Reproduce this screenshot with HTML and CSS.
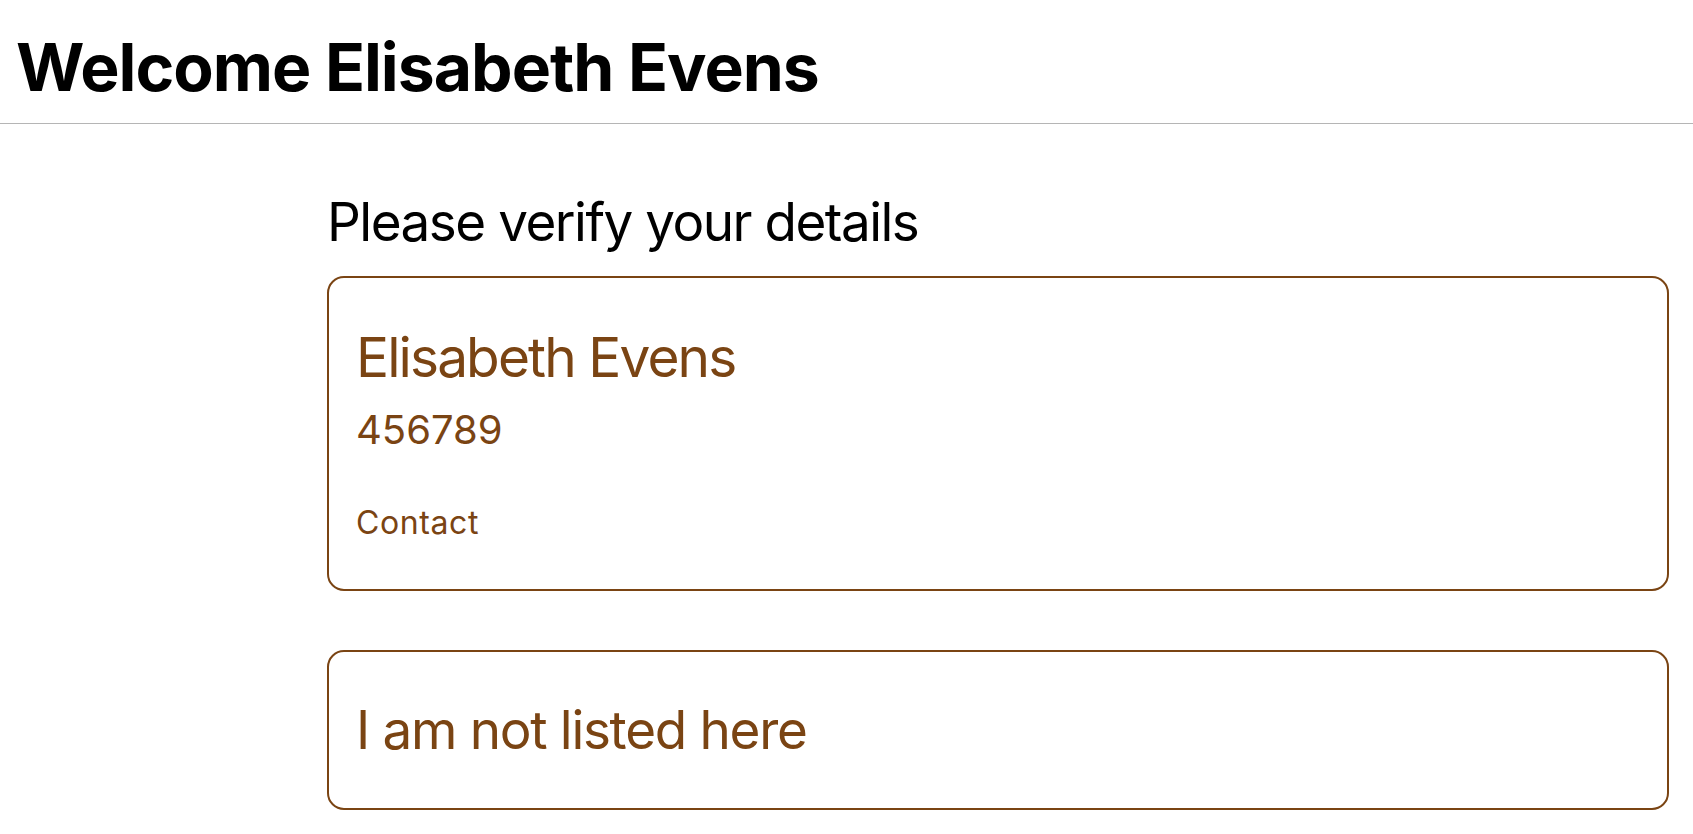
FILE: index.html
```html
<!DOCTYPE html>
<html lang="en">
<head>
<meta charset="utf-8">
<title>Welcome</title>
<link rel="stylesheet" href="styles.css">
</head>
<body>
<header class="topbar">
  <h1 class="title">Welcome Elisabeth Evens</h1>
</header>
<main class="content">
  <h2 class="prompt">Please verify your details</h2>
  <section class="card card-person">
    <div class="person-name">Elisabeth Evens</div>
    <div class="person-id">456789</div>
    <div class="person-link">Contact</div>
  </section>
  <section class="card card-other">
    <div class="other-text">I am not listed here</div>
  </section>
</main>
</body>
</html>
```
FILE: styles.css
```css
html, body {
  margin: 0;
  padding: 0;
  background: #ffffff;
}
body {
  font-family: Inter, "Noto Sans", "Liberation Sans", sans-serif;
  color: #000;
}
.topbar {
  border-bottom: 1px solid #b5b5b5;
  padding: 27px 16px 16px;
}
.title {
  margin: 0;
  font-size: 66px;
  line-height: 80px;
  font-weight: 700;
  letter-spacing: -1px;
}
.content {
  padding: 0 24px 0 327px;
  display: flex;
  flex-direction: column;
}
.prompt {
  margin: 66px 0 22px;
  font-size: 53px;
  line-height: 64px;
  font-weight: 400;
  letter-spacing: -1.5px;
}
.card {
  border: 2px solid #7a4413;
  border-radius: 17px;
  color: #7a4413;
  padding: 0 27px;
}
.card-person {
  padding-top: 46px;
  padding-bottom: 47px;
}
.person-name {
  font-size: 55px;
  line-height: 67px;
  letter-spacing: -1.9px;
}
.person-id {
  margin-top: 15px;
  font-size: 40px;
  line-height: 48px;
}
.person-link {
  margin-top: 49px;
  font-size: 32px;
  line-height: 39px;
  letter-spacing: 0.6px;
}
.card-other {
  margin-top: 59px;
  padding-top: 46px;
  padding-bottom: 46px;
}
.other-text {
  font-size: 53px;
  line-height: 64px;
  letter-spacing: -1.3px;
}
```
